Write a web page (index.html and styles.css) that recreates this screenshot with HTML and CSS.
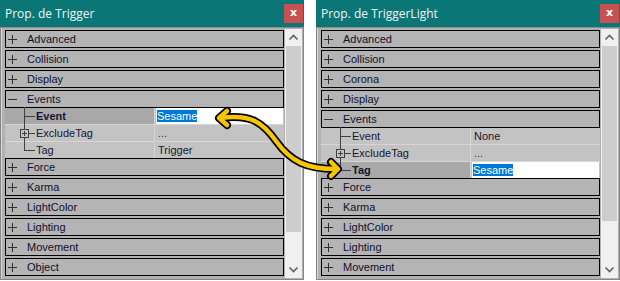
FILE: index.html
```html
<!DOCTYPE html>
<html>

<head>
    <link rel="stylesheet" href="styles.css">
</head>

<body>

    <div id="desk">
        <div class="window">
            <div class="titlebar">
                <span class="title">Prop. de Trigger</span>
                <span class="close">x</span>
            </div>
            <div class="body">
                <div class="grid">
                    <div class="cat"><svg class="tog" width="9" height="9"><path d="M0 4.5h9M4.5 0v9" /></svg><span>Advanced</span></div>
                    <div class="cat"><svg class="tog" width="9" height="9"><path d="M0 4.5h9M4.5 0v9" /></svg><span>Collision</span></div>
                    <div class="cat"><svg class="tog" width="9" height="9"><path d="M0 4.5h9M4.5 0v9" /></svg><span>Display</span></div>
                    <div class="cat open"><svg class="tog" width="9" height="9"><path d="M0 4.5h9" /></svg><span>Events</span></div>
                    <div class="props">
                        <div class="prop sel">
                            <div class="name">Event</div>
                            <div class="val"><span class="edit"><span class="hl">Sesame</span></span></div>
                        </div>
                        <div class="prop">
                            <div class="name"><svg class="sub" width="9" height="9"><rect x="0.5" y="0.5" width="8" height="8" /><path d="M2 4.5h5M4.5 2v5" /></svg>ExcludeTag</div>
                            <div class="val dots">...</div>
                        </div>
                        <div class="prop last">
                            <div class="name">Tag</div>
                            <div class="val">Trigger</div>
                        </div>
                    </div>
                    <div class="cat"><svg class="tog" width="9" height="9"><path d="M0 4.5h9M4.5 0v9" /></svg><span>Force</span></div>
                    <div class="cat"><svg class="tog" width="9" height="9"><path d="M0 4.5h9M4.5 0v9" /></svg><span>Karma</span></div>
                    <div class="cat"><svg class="tog" width="9" height="9"><path d="M0 4.5h9M4.5 0v9" /></svg><span>LightColor</span></div>
                    <div class="cat"><svg class="tog" width="9" height="9"><path d="M0 4.5h9M4.5 0v9" /></svg><span>Lighting</span></div>
                    <div class="cat"><svg class="tog" width="9" height="9"><path d="M0 4.5h9M4.5 0v9" /></svg><span>Movement</span></div>
                    <div class="cat"><svg class="tog" width="9" height="9"><path d="M0 4.5h9M4.5 0v9" /></svg><span>Object</span></div>
                </div>
                <div class="scroll">
                    <svg class="arrow" width="17" height="17"><path d="M4.5 10.5l4-4 4 4" /></svg>
                    <div class="thumb long"></div>
                    <div class="track"></div>
                    <svg class="arrow" width="17" height="17"><path d="M4.5 6.5l4 4 4-4" /></svg>
                </div>
            </div>
        </div>

        <div class="window">
            <div class="titlebar">
                <span class="title">Prop. de TriggerLight</span>
                <span class="close">x</span>
            </div>
            <div class="body">
                <div class="grid">
                    <div class="cat"><svg class="tog" width="9" height="9"><path d="M0 4.5h9M4.5 0v9" /></svg><span>Advanced</span></div>
                    <div class="cat"><svg class="tog" width="9" height="9"><path d="M0 4.5h9M4.5 0v9" /></svg><span>Collision</span></div>
                    <div class="cat"><svg class="tog" width="9" height="9"><path d="M0 4.5h9M4.5 0v9" /></svg><span>Corona</span></div>
                    <div class="cat"><svg class="tog" width="9" height="9"><path d="M0 4.5h9M4.5 0v9" /></svg><span>Display</span></div>
                    <div class="cat open"><svg class="tog" width="9" height="9"><path d="M0 4.5h9" /></svg><span>Events</span></div>
                    <div class="props">
                        <div class="prop">
                            <div class="name">Event</div>
                            <div class="val">None</div>
                        </div>
                        <div class="prop">
                            <div class="name"><svg class="sub" width="9" height="9"><rect x="0.5" y="0.5" width="8" height="8" /><path d="M2 4.5h5M4.5 2v5" /></svg>ExcludeTag</div>
                            <div class="val dots">...</div>
                        </div>
                        <div class="prop sel last">
                            <div class="name">Tag</div>
                            <div class="val"><span class="edit"><span class="hl">Sesame</span></span></div>
                        </div>
                    </div>
                    <div class="cat"><svg class="tog" width="9" height="9"><path d="M0 4.5h9M4.5 0v9" /></svg><span>Force</span></div>
                    <div class="cat"><svg class="tog" width="9" height="9"><path d="M0 4.5h9M4.5 0v9" /></svg><span>Karma</span></div>
                    <div class="cat"><svg class="tog" width="9" height="9"><path d="M0 4.5h9M4.5 0v9" /></svg><span>LightColor</span></div>
                    <div class="cat"><svg class="tog" width="9" height="9"><path d="M0 4.5h9M4.5 0v9" /></svg><span>Lighting</span></div>
                    <div class="cat"><svg class="tog" width="9" height="9"><path d="M0 4.5h9M4.5 0v9" /></svg><span>Movement</span></div>
                </div>
                <div class="scroll">
                    <svg class="arrow" width="17" height="17"><path d="M4.5 10.5l4-4 4 4" /></svg>
                    <div class="thumb short"></div>
                    <div class="track"></div>
                    <svg class="arrow" width="17" height="17"><path d="M4.5 6.5l4 4 4-4" /></svg>
                </div>
            </div>
        </div>

        <!-- link arrow between the two Sesame fields -->
        <svg class="link" width="620" height="281">
            <g class="outline">
                <path d="M221 118 C252 114 263 123 276 141 C291 162 307 169 336 169" />
                <path d="M227 111 L219 118 L227 125" />
                <path d="M331 162 L338 169 L331 176" />
            </g>
            <g class="fill">
                <path d="M221 118 C252 114 263 123 276 141 C291 162 307 169 336 169" />
                <path d="M227 111 L219 118 L227 125" />
                <path d="M331 162 L338 169 L331 176" />
            </g>
        </svg>
    </div>

</body>

</html>
```

FILE: styles.css
```css
* {
    box-sizing: border-box;
}

body {
    margin: 0px;
    padding: 0px;
    background: white;
    font-family: "Liberation Sans", Arial, sans-serif;
    font-size: 11px;
}

#desk {
    position: relative;
    display: flex;
    gap: 12px;
    width: 620px;
    height: 281px;
}

.window {
    width: 304px;
    height: 280px;
    display: flex;
    flex-direction: column;
    border: 1px solid #858585;
    border-top: none;
    background: #f0f0f0;
}

.titlebar {
    height: 28px;
    flex: none;
    display: flex;
    align-items: flex-start;
    justify-content: space-between;
    background: #0b7676;
    border-bottom: 1px solid #8c8c8c;
    margin: 0px -1px;
}

.title {
    font-family: "Open Sans", "Noto Sans", sans-serif;
    font-size: 12px;
    color: #eef6f6;
    padding: 5px 0px 0px 5px;
}

.close {
    width: 19px;
    height: 19px;
    margin-top: 4px;
    margin-right: 1px;
    background: #c75050;
    color: white;
    font-family: "DejaVu Sans", sans-serif;
    font-weight: bold;
    font-size: 11px;
    line-height: 17px;
    text-align: center;
}

.body {
    flex: 1;
    display: flex;
    gap: 1px;
    padding: 0px 1px 0px 3px;
    background: #b1b1b1;
    border-left: 1px solid #d8d8d8;
}

.grid {
    width: 280px;
    padding-top: 2px;
    overflow: hidden;
}

.cat {
    height: 18px;
    margin-bottom: 2px;
    display: flex;
    align-items: center;
    border: 1px solid #000;
    background: #b4b4b4;
    color: #10102c;
}

.cat.open {
    margin-bottom: 0px;
}

.tog {
    margin: 0px 10px 0px 2px;
    stroke: #303030;
    stroke-width: 1;
    fill: none;
}

.props {
    margin-bottom: 0px;
}

.prop {
    height: 17px;
    display: flex;
    border-bottom: 1px solid #d6d6d6;
    background: #c3c3c3;
    color: #16162e;
}

.prop.last {
    height: 16px;
    border-bottom: none;
}

.prop .name {
    position: relative;
    width: 150px;
    padding: 1px 0px 0px 31px;
    line-height: 15px;
    border-right: 1px solid #d6d6d6;
}

.prop .name::before {
    content: "";
    position: absolute;
    left: 19px;
    top: -1px;
    bottom: -1px;
    border-left: 1px solid #404040;
}

.prop.last .name::before {
    bottom: 7px;
}

.prop .name::after {
    content: "";
    position: absolute;
    left: 19px;
    width: 11px;
    top: 8px;
    border-top: 1px solid #404040;
}

.prop.sel .name {
    background: #a8a8a8;
    font-weight: bold;
}

.sub {
    position: absolute;
    left: 15px;
    top: 4px;
    z-index: 1;
    fill: #c3c3c3;
    stroke: #404040;
    stroke-width: 1;
}

.prop .val {
    flex: 1;
    padding: 1px 0px 0px 3px;
    line-height: 15px;
}

.prop .val.dots {
    color: #5a1e5a;
}

.prop.sel .val {
    padding: 0px 1px 0px 1px;
}

.edit {
    display: block;
    height: 16px;
    background: white;
    padding: 1px 0px 0px 1px;
    line-height: 14px;
}

.hl {
    background: #0078d7;
    color: white;
}

.scroll {
    width: 17px;
    display: flex;
    flex-direction: column;
    background: #f0f0f0;
    margin-top: 1px;
    margin-bottom: 1px;
}

.arrow {
    flex: none;
    stroke: #606060;
    stroke-width: 1.6;
    fill: none;
}

.thumb {
    margin: 0px 1px;
    background: #cdcdcd;
}

.thumb.long {
    height: 186px;
}

.thumb.short {
    height: 175px;
}

.track {
    flex: 1;
}

.link {
    position: absolute;
    left: 0px;
    top: 0px;
    pointer-events: none;
}

.link path {
    fill: none;
    stroke-linecap: round;
    stroke-linejoin: round;
}

.link .outline path {
    stroke: #000;
    stroke-width: 8;
}

.link .fill path {
    stroke: #f7c600;
    stroke-width: 4.5;
}
```
